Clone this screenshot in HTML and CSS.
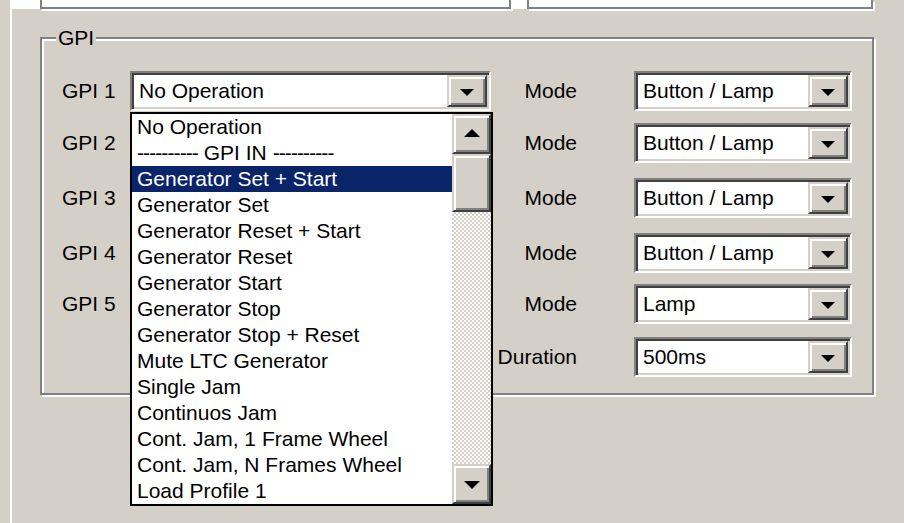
FILE: index.html
```html
<!DOCTYPE html>
<html lang="en">
<head>
<meta charset="utf-8">
<title>GPI Settings</title>
<link rel="stylesheet" href="styles.css">
</head>
<body>
<div class="page">
  <div class="tab">
    <div class="top-strip">
      <div class="top-box top-box-left"></div>
      <div class="top-box top-box-right"></div>
    </div>

    <div class="group">
      <div class="group-title">GPI</div>
      <div class="grid">
        <!-- GPI 1 (list open) -->
        <div class="lbl">GPI 1</div>
        <div class="combo-wrap">
          <div class="combo">
            <span class="combo-text">No Operation</span>
            <span class="combo-btn"><span class="arrow-down"></span></span>
          </div>
          <div class="droplist">
            <div class="items">
              <div class="item">No Operation</div>
              <div class="item"><span class="dash">----------</span> GPI IN <span class="dash">----------</span></div>
              <div class="item sel">Generator Set + Start</div>
              <div class="item">Generator Set</div>
              <div class="item">Generator Reset + Start</div>
              <div class="item">Generator Reset</div>
              <div class="item">Generator Start</div>
              <div class="item">Generator Stop</div>
              <div class="item">Generator Stop + Reset</div>
              <div class="item">Mute LTC Generator</div>
              <div class="item">Single Jam</div>
              <div class="item">Continuos Jam</div>
              <div class="item">Cont. Jam, 1 Frame Wheel</div>
              <div class="item">Cont. Jam, N Frames Wheel</div>
              <div class="item">Load Profile 1</div>
            </div>
            <div class="vscroll">
              <div class="sb-btn"><span class="arrow-up"></span></div>
              <div class="sb-thumb"></div>
              <div class="sb-track"></div>
              <div class="sb-btn"><span class="arrow-down big"></span></div>
            </div>
          </div>
        </div>
        <div class="lbl-r">Mode</div>
        <div class="combo combo-narrow">
          <span class="combo-text">Button / Lamp</span>
          <span class="combo-btn"><span class="arrow-down"></span></span>
        </div>

        <!-- GPI 2 (covered by the open list) -->
        <div class="lbl">GPI 2</div>
        <div class="combo">
          <span class="combo-text"></span>
          <span class="combo-btn"><span class="arrow-down"></span></span>
        </div>
        <div class="lbl-r">Mode</div>
        <div class="combo combo-narrow">
          <span class="combo-text">Button / Lamp</span>
          <span class="combo-btn"><span class="arrow-down"></span></span>
        </div>

        <!-- GPI 3 -->
        <div class="lbl">GPI 3</div>
        <div class="combo">
          <span class="combo-text"></span>
          <span class="combo-btn"><span class="arrow-down"></span></span>
        </div>
        <div class="lbl-r">Mode</div>
        <div class="combo combo-narrow">
          <span class="combo-text">Button / Lamp</span>
          <span class="combo-btn"><span class="arrow-down"></span></span>
        </div>

        <!-- GPI 4 -->
        <div class="lbl">GPI 4</div>
        <div class="combo">
          <span class="combo-text"></span>
          <span class="combo-btn"><span class="arrow-down"></span></span>
        </div>
        <div class="lbl-r">Mode</div>
        <div class="combo combo-narrow">
          <span class="combo-text">Button / Lamp</span>
          <span class="combo-btn"><span class="arrow-down"></span></span>
        </div>

        <!-- GPI 5 -->
        <div class="lbl">GPI 5</div>
        <div class="combo">
          <span class="combo-text"></span>
          <span class="combo-btn"><span class="arrow-down"></span></span>
        </div>
        <div class="lbl-r">Mode</div>
        <div class="combo combo-narrow">
          <span class="combo-text">Lamp</span>
          <span class="combo-btn"><span class="arrow-down"></span></span>
        </div>

        <!-- Pulse duration -->
        <div class="lbl"></div>
        <div></div>
        <div class="lbl-r">Duration</div>
        <div class="combo combo-narrow">
          <span class="combo-text">500ms</span>
          <span class="combo-btn"><span class="arrow-down"></span></span>
        </div>
      </div>
    </div>
  </div>
</div>
</body>
</html>
```

FILE: styles.css
```css
html, body {
  margin: 0;
  padding: 0;
}

body {
  background: #d4d0c8;
  font-family: "Liberation Sans", Arial, sans-serif;
  font-size: 21px;
  color: #000;
}

.page {
  width: 904px;
  height: 523px;
  overflow: hidden;
  padding-left: 10px;
  box-sizing: border-box;
}

.tab {
  height: 100%;
  border-left: 2px solid #fff;
}

/* bottoms of the panels above */
.top-strip {
  display: flex;
  gap: 16px;
  width: 861px;
  height: 11px;
  padding-left: 28px;
  box-sizing: border-box;
  background: linear-gradient(#fff 0 9px, transparent 9px);
}

.top-box {
  height: 9px;
  box-sizing: border-box;
  border: 2px solid #808080;
  border-top: 0;
  box-shadow: 2px 2px 0 #fff;
}

.top-box-left { width: 471px; }
.top-box-right { width: 346px; }

/* etched group box */
.group {
  position: relative;
  margin: 26px 0 0 28px;
  width: 834px;
  height: 358px;
  box-sizing: border-box;
  border: 2px solid #808080;
  box-shadow: inset 2px 2px 0 #fff, 2px 2px 0 #fff;
  padding: 32px 0 0 20px;
}

.group-title {
  position: absolute;
  left: 14px;
  top: -13px;
  padding: 0 2px;
  line-height: 24px;
  background: #d4d0c8;
}

.grid {
  display: grid;
  grid-template-columns: 68px 361px 86px 275px;
  grid-template-rows: 52px 55px 55px 51px 53px 40px;
  align-items: start;
}

.lbl,
.lbl-r {
  line-height: 40px;
  white-space: nowrap;
}

.lbl-r {
  justify-self: end;
}

/* sunken combo box */
.combo-wrap {
  position: relative;
}

.combo {
  display: flex;
  height: 40px;
  box-sizing: border-box;
  padding: 2px;
  background: #fff;
  border: 2px solid;
  border-color: #808080 #fff #fff #808080;
  box-shadow: inset 2px 2px 0 #404040, inset -2px -2px 0 #d4d0c8;
}

.combo-narrow {
  width: 218px;
  justify-self: end;
}

.combo-text {
  flex: 1;
  padding-left: 5px;
  line-height: 32px;
  white-space: nowrap;
  overflow: hidden;
}

.combo-btn,
.sb-btn,
.sb-thumb {
  box-sizing: border-box;
  background: #d4d0c8;
  border: 2px solid;
  border-color: #d4d0c8 #404040 #404040 #d4d0c8;
  box-shadow: inset 2px 2px 0 #fff, inset -2px -2px 0 #808080;
}

.combo-btn {
  width: 40px;
  height: 32px;
  display: flex;
  align-items: center;
  justify-content: center;
}

.arrow-down {
  width: 0;
  height: 0;
  border-left: 7px solid transparent;
  border-right: 7px solid transparent;
  border-top: 7px solid #000;
  margin-top: 2px;
}

.arrow-down.big {
  border-left-width: 8px;
  border-right-width: 8px;
  border-top-width: 8px;
}

.arrow-up {
  width: 0;
  height: 0;
  border-left: 8px solid transparent;
  border-right: 8px solid transparent;
  border-bottom: 8px solid #000;
  margin-bottom: 2px;
}

/* open drop-down list */
.droplist {
  position: absolute;
  left: 0;
  top: 41px;
  z-index: 2;
  display: flex;
  width: 363px;
  height: 394px;
  box-sizing: border-box;
  border: 2px solid #000;
  background: #fff;
}

.items {
  width: 320px;
}

.item {
  height: 26px;
  line-height: 26px;
  padding-left: 5px;
  white-space: nowrap;
}

.item.sel {
  background: #0a246a;
  color: #fff;
}

.dash {
  letter-spacing: -0.9px;
}

.vscroll {
  flex: 1;
  display: flex;
  flex-direction: column;
}

.sb-btn {
  height: 40px;
  display: flex;
  align-items: center;
  justify-content: center;
}

.sb-thumb {
  height: 58px;
}

.sb-track {
  flex: 1;
  background-color: #fff;
  background-image: conic-gradient(#d4d0c8 25%, #fff 0 50%, #d4d0c8 0 75%, #fff 0);
  background-size: 4px 4px;
}
```
